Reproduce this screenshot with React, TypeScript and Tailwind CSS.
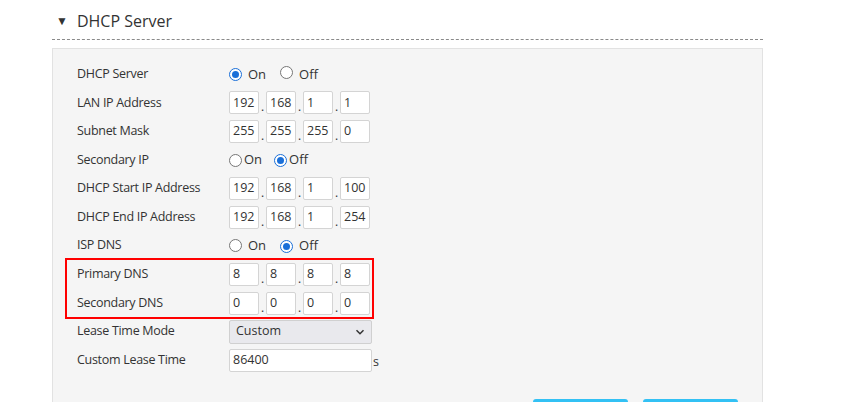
import React from "react";

const font = { fontFamily: '"Open Sans", "Noto Sans", sans-serif' };

function Radio({ checked }: { checked: boolean }) {
  return (
    <span
      className={
        "inline-flex h-[13px] w-[13px] items-center justify-center rounded-full border bg-white " +
        (checked ? "border-[#1a6fd8]" : "border-[#767676]")
      }
    >
      {checked && <span className="h-[7px] w-[7px] rounded-full bg-[#1a6fd8]" />}
    </span>
  );
}

function RadioPair({ on, tight }: { on: boolean; tight?: boolean }) {
  return (
    <div className="flex items-center text-[13px] text-[#333]">
      <Radio checked={on} />
      <span className={tight ? "ml-[2px]" : "ml-[6px]"}>On</span>
      <span className={tight ? "ml-[12px]" : "ml-[14px]"}>
        <Radio checked={!on} />
      </span>
      <span className={tight ? "ml-[2px]" : "ml-[6px]"}>Off</span>
    </div>
  );
}

function Ip({ v }: { v: string[] }) {
  return (
    <div className="flex items-end">
      {v.map((x, i) => (
        <React.Fragment key={i}>
          {i > 0 && <span className="w-[7px] text-center text-[12px] leading-[14px] text-[#333]">.</span>}
          <div className="flex h-[23px] w-[30px] items-center rounded-[2px] border border-[#d4d4d4] bg-white pl-[3px] text-[12.5px] text-[#333]">
            {x}
          </div>
        </React.Fragment>
      ))}
    </div>
  );
}

function Row({ label, children }: { label: string; children: React.ReactNode }) {
  return (
    <div className="flex h-[28.6px] items-center">
      <div className="w-[152px] text-[12.5px] tracking-[-0.3px] text-[#333]">{label}</div>
      <div className="flex items-center">{children}</div>
    </div>
  );
}

export default function App() {
  return (
    <div className="h-[402px] w-[863px] overflow-hidden bg-white" style={font}>
      <div className="ml-[52px] w-[711px]">
        <div className="flex h-[39px] items-center pt-[3px]">
          <span className="ml-[4px] text-[12px] text-[#333]">▼</span>
          <span className="ml-[9px] text-[16px] text-[#333]">DHCP Server</span>
        </div>
        <div className="border-t border-dashed border-[#8a8a8a]" />
        <div className="mt-[8px] h-[400px] border border-[#e2e2e2] bg-[#f5f5f5] pl-[24px] pt-[11px]">
          <Row label="DHCP Server">
            <RadioPair on />
          </Row>
          <Row label="LAN IP Address">
            <Ip v={["192", "168", "1", "1"]} />
          </Row>
          <Row label="Subnet Mask">
            <Ip v={["255", "255", "255", "0"]} />
          </Row>
          <Row label="Secondary IP">
            <RadioPair on={false} tight />
          </Row>
          <Row label="DHCP Start IP Address">
            <Ip v={["192", "168", "1", "100"]} />
          </Row>
          <Row label="DHCP End IP Address">
            <Ip v={["192", "168", "1", "254"]} />
          </Row>
          <Row label="ISP DNS">
            <RadioPair on={false} />
          </Row>
          <div className="relative -my-[2px] -ml-[12px] w-[309px] border-2 border-[#ff0000] pl-[10px]">
            <Row label="Primary DNS">
              <Ip v={["8", "8", "8", "8"]} />
            </Row>
            <Row label="Secondary DNS">
              <Ip v={["0", "0", "0", "0"]} />
            </Row>
          </div>
          <Row label="Lease Time Mode">
            <div className="flex h-[24px] w-[143px] items-center justify-between rounded-[2px] border border-[#d0d0d0] bg-[#e9e9ed] pl-[6px] pr-[6px] text-[12.5px] text-[#333]">
              <span>Custom</span>
              <svg width="10" height="10" viewBox="0 0 10 10">
                <path d="M1.5 3.2 L5 6.7 L8.5 3.2" fill="none" stroke="#333" strokeWidth="1.5" />
              </svg>
            </div>
          </Row>
          <Row label="Custom Lease Time">
            <div className="flex h-[23px] w-[143px] items-center rounded-[2px] border border-[#d4d4d4] bg-white pl-[3px] text-[12.5px] text-[#333]">
              86400
            </div>
            <span className="ml-[1px] self-end text-[12.5px] text-[#333]">s</span>
          </Row>
          <div className="mt-[24px] flex gap-[15px] pl-[456px]">
            <div className="h-[20px] w-[95px] rounded-[3px] bg-[#33c1f4]" />
            <div className="h-[20px] w-[95px] rounded-[3px] bg-[#33c1f4]" />
          </div>
        </div>
      </div>
    </div>
  );
}
